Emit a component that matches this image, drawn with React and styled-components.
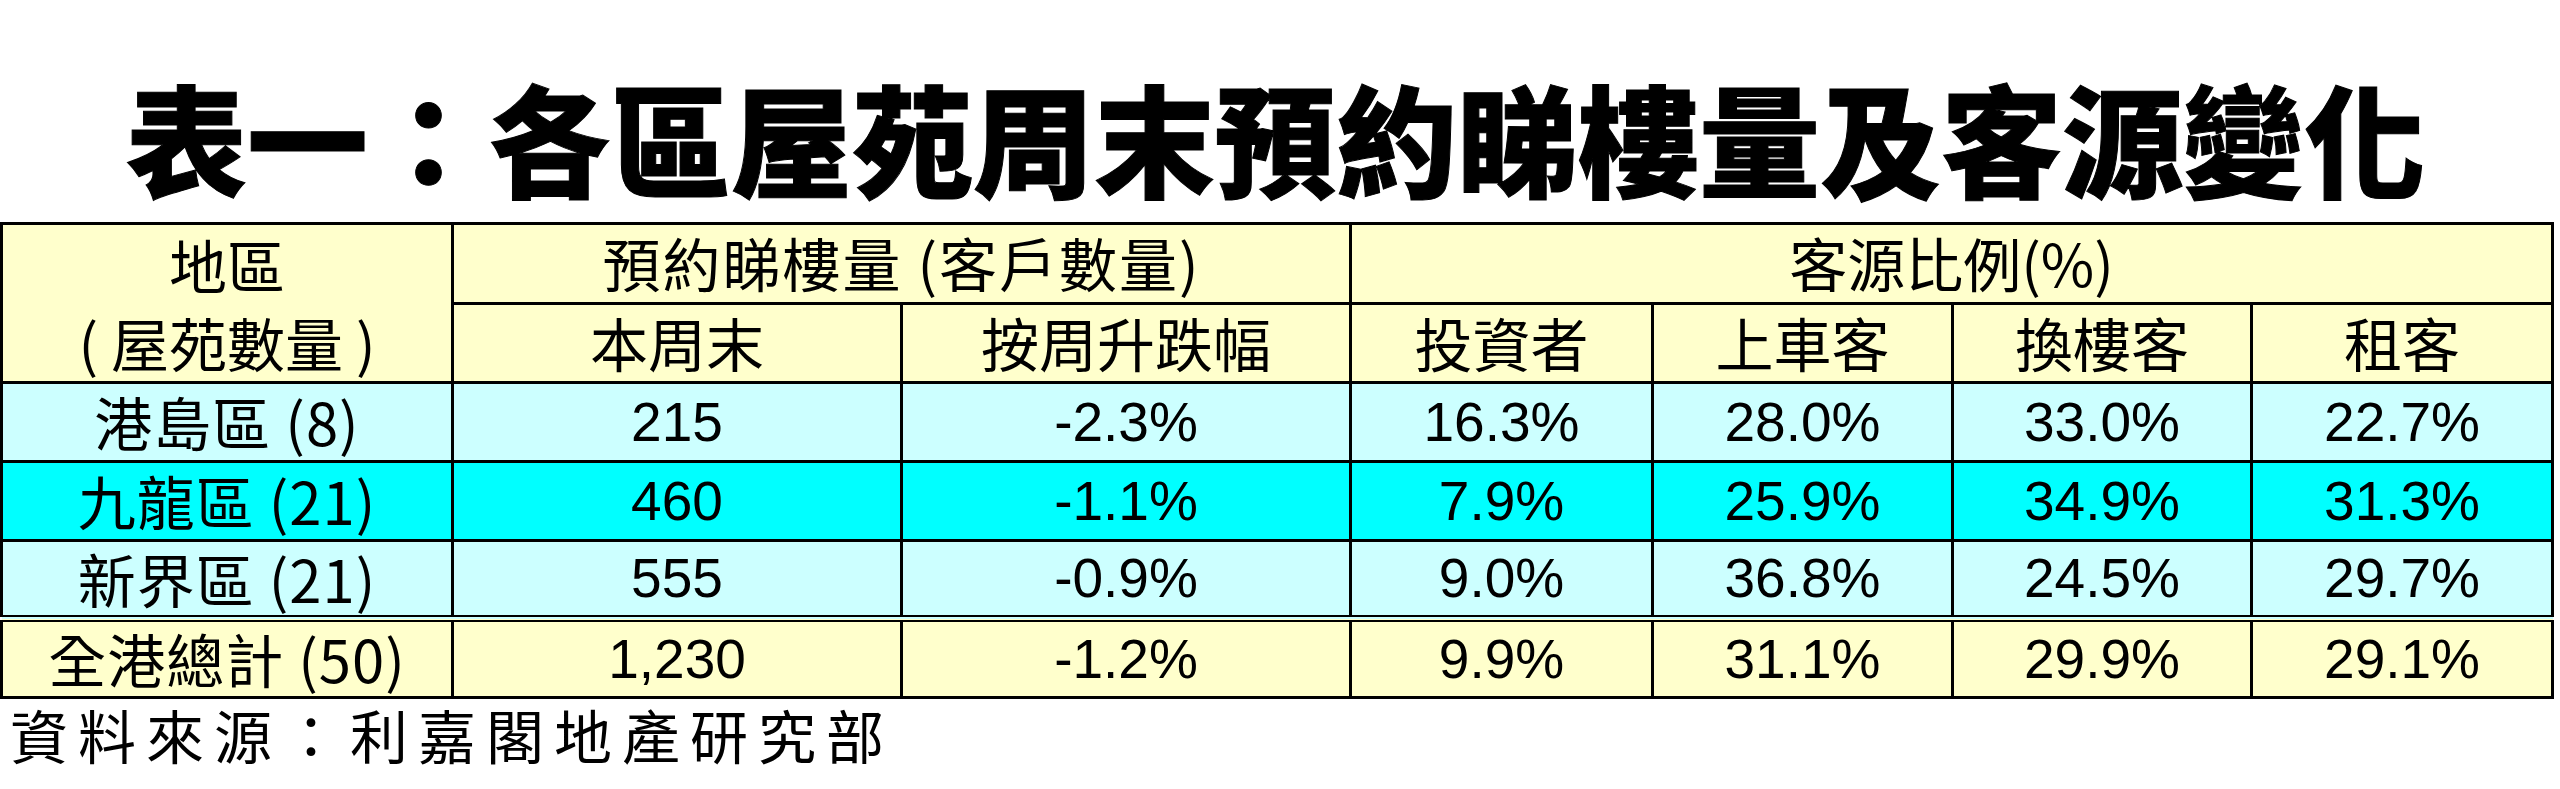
import React from "react";
import styled, { createGlobalStyle, css } from "styled-components";

const GlobalStyle = createGlobalStyle`
  html, body {
    margin: 0;
    padding: 0;
    background: #ffffff;
  }
  body {
    font-family: "Noto Sans CJK TC", "Noto Sans", sans-serif;
    color: #000000;
  }
`;

const Page = styled.div`
  width: 2560px;
  height: 789px;
  overflow: hidden;
  display: flex;
  flex-direction: column;
`;

const Title = styled.h1`
  margin: 0;
  padding-top: 75px;
  width: 2551px;
  text-align: center;
  font-family: "Noto Sans CJK TC", sans-serif;
  font-size: 121px;
  font-weight: 900;
  line-height: 1;
  -webkit-text-stroke: 1px #000;
`;

const Table = styled.table`
  margin-top: 26px;
  width: 2551px;
  table-layout: fixed;
  border-collapse: collapse;
  border: 3px solid #000;
`;

const tones = {
  head: "#ffffcc",
  pale: "#ccffff",
  bright: "#00ffff",
  total: "#ffffcc",
};

const Row = styled.tr`
  height: 78px;
  background: ${(p) => tones[p.$tone]};
  ${(p) =>
    p.$tone === "total" &&
    css`
      td {
        border-top: 7px double #000;
      }
    `}
`;

const HeadCell = styled.th`
  padding: 0;
  border: 3px solid #000;
  font-family: "Noto Sans CJK TC", sans-serif;
  font-size: 58px;
  font-weight: 400;
  line-height: ${(p) => (p.$stacked ? "78px" : "1.2")};
  letter-spacing: ${(p) => (p.$wide ? "2px" : "0")};
  text-align: center;
  vertical-align: middle;
  white-space: nowrap;
`;

const LabelCell = styled.td`
  padding: 0;
  border: 3px solid #000;
  font-family: "Noto Sans CJK TC", sans-serif;
  font-size: 58px;
  line-height: 1.2;
  letter-spacing: 1px;
  text-align: center;
  vertical-align: middle;
  white-space: nowrap;
`;

const NumCell = styled.td`
  padding: 0;
  border: 3px solid #000;
  font-family: "Liberation Sans", Arial, sans-serif;
  font-size: 55px;
  line-height: 1.2;
  text-align: center;
  vertical-align: middle;
`;

const Source = styled.p`
  margin: 9px 0 0 10px;
  font-family: "Noto Sans CJK TC", sans-serif;
  font-size: 58px;
  line-height: 1;
  letter-spacing: 10px;
`;

const widths = [451, 449, 449, 302, 300, 299, 301];

const rows = [
  { label: "港島區 (8)", count: "215", change: "-2.3%", shares: ["16.3%", "28.0%", "33.0%", "22.7%"], tone: "pale" },
  { label: "九龍區 (21)", count: "460", change: "-1.1%", shares: ["7.9%", "25.9%", "34.9%", "31.3%"], tone: "bright" },
  { label: "新界區 (21)", count: "555", change: "-0.9%", shares: ["9.0%", "36.8%", "24.5%", "29.7%"], tone: "pale" },
  { label: "全港總計 (50)", count: "1,230", change: "-1.2%", shares: ["9.9%", "31.1%", "29.9%", "29.1%"], tone: "total" },
];

const subHeads = ["本周末", "按周升跌幅", "投資者", "上車客", "換樓客", "租客"];

export default function App() {
  return (
    <Page>
      <GlobalStyle />
      <Title>表一：各區屋苑周末預約睇樓量及客源變化</Title>
      <Table>
        <colgroup>
          {widths.map((w, i) => (
            <col key={i} style={{ width: w }} />
          ))}
        </colgroup>
        <thead>
          <Row $tone="head">
            <HeadCell rowSpan={2} $stacked>
              地區
              <br />( 屋苑數量 )
            </HeadCell>
            <HeadCell colSpan={2} $wide>
              預約睇樓量 (客戶數量)
            </HeadCell>
            <HeadCell colSpan={4}>客源比例(%)</HeadCell>
          </Row>
          <Row $tone="head">
            {subHeads.map((h) => (
              <HeadCell key={h}>{h}</HeadCell>
            ))}
          </Row>
        </thead>
        <tbody>
          {rows.map((r) => (
            <Row key={r.label} $tone={r.tone}>
              <LabelCell>{r.label}</LabelCell>
              <NumCell>{r.count}</NumCell>
              <NumCell>{r.change}</NumCell>
              {r.shares.map((s, i) => (
                <NumCell key={i}>{s}</NumCell>
              ))}
            </Row>
          ))}
        </tbody>
      </Table>
      <Source>資料來源：利嘉閣地產研究部</Source>
    </Page>
  );
}
